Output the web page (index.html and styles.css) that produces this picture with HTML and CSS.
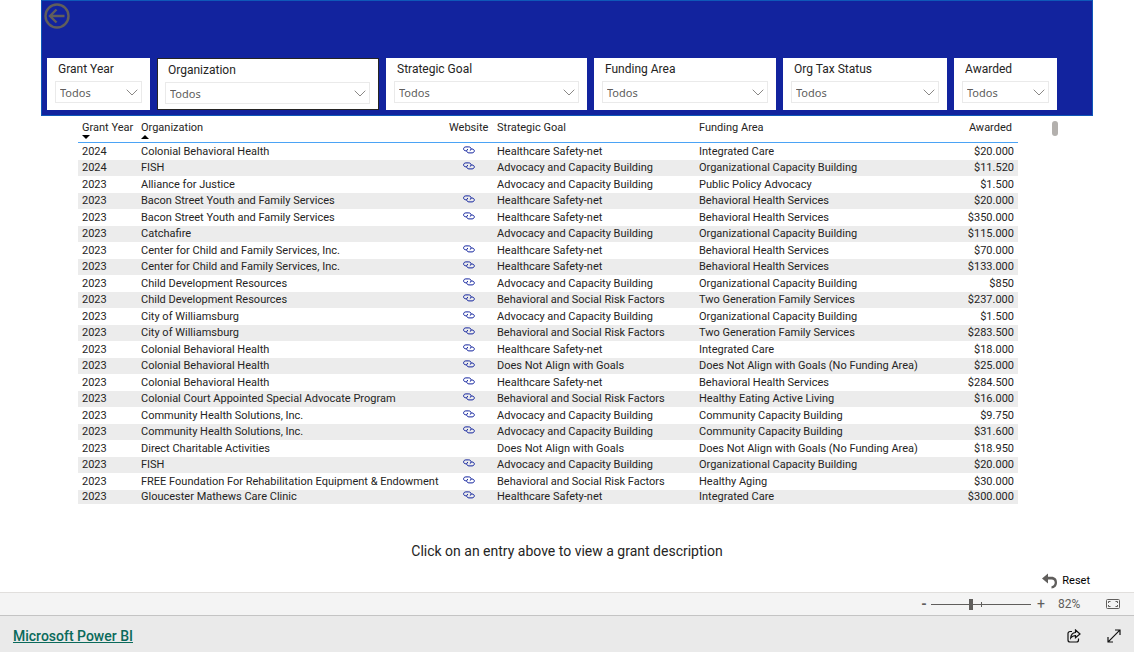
FILE: index.html
```html
<!DOCTYPE html>
<html lang="en">
<head>
<meta charset="utf-8">
<meta name="viewport" content="width=device-width, initial-scale=1">
<title>Grants</title>
<link rel="stylesheet" href="styles.css">
</head>
<body>
<svg class="sprite" aria-hidden="true">
  <symbol id="link" viewBox="0 0 12 8"><path d="M3.500 4.800H2.800C1.500 4.800.6 4 .6 2.900S1.500.900 2.800.900h3c1.300 0 2.300.8 2.300 2 0 .8-.5 1.500-1.300 1.800M8.300 3h.7c1.300 0 2.300.8 2.300 1.900S10.300 6.900 9 6.900H6C4.700 6.900 3.700 6 3.700 4.900c0-.8.500-1.500 1.300-1.800" fill="none" stroke="currentColor"/></symbol>
  <symbol id="chevron" viewBox="0 0 12 7"><path d="M.7.7 6 6 11.300.7" fill="none" stroke="currentColor"/></symbol>
</svg>
<main class="report">
  <header class="banner">
    <button class="back" aria-label="Back"><svg viewBox="0 0 26 26"><circle cx="13" cy="13" r="11.500"/><path d="M20.500 13H6M12.500 6.500 6 13l6.500 6.500"/></svg></button>
    <div class="slicers">
      <div class="slicer"><label for="s1">Grant Year</label><div class="pick"><select id="s1"><option>Todos</option></select><svg><use href="#chevron"/></svg></div></div>
      <div class="slicer selected"><label for="s2">Organization</label><div class="pick"><select id="s2"><option>Todos</option></select><svg><use href="#chevron"/></svg></div></div>
      <div class="slicer"><label for="s3">Strategic Goal</label><div class="pick"><select id="s3"><option>Todos</option></select><svg><use href="#chevron"/></svg></div></div>
      <div class="slicer"><label for="s4">Funding Area</label><div class="pick"><select id="s4"><option>Todos</option></select><svg><use href="#chevron"/></svg></div></div>
      <div class="slicer"><label for="s5">Org Tax Status</label><div class="pick"><select id="s5"><option>Todos</option></select><svg><use href="#chevron"/></svg></div></div>
      <div class="slicer"><label for="s6">Awarded</label><div class="pick"><select id="s6"><option>Todos</option></select><svg><use href="#chevron"/></svg></div></div>
    </div>
  </header>
  <div class="grid-area">
    <table class="grants">
      <colgroup><col class="c-year"><col class="c-org"><col class="c-web"><col class="c-goal"><col class="c-area"><col class="c-award"></colgroup>
      <thead><tr>
        <th aria-sort="descending">Grant Year<svg class="sort" viewBox="0 0 8 4"><path d="M0 0h8L4 4z"/></svg></th>
        <th aria-sort="ascending">Organization<svg class="sort" viewBox="0 0 8 4"><path d="M0 4h8L4 0z"/></svg></th>
        <th>Website</th><th>Strategic Goal</th><th>Funding Area</th><th class="num">Awarded</th>
      </tr></thead>
      <tbody>
        <tr><td>2024</td><td>Colonial Behavioral Health</td><td><a href="#" aria-label="Website"><svg><use href="#link"/></svg></a></td><td>Healthcare Safety-net</td><td>Integrated Care</td><td>$20.000</td></tr>
        <tr><td>2024</td><td>FISH</td><td><a href="#" aria-label="Website"><svg><use href="#link"/></svg></a></td><td>Advocacy and Capacity Building</td><td>Organizational Capacity Building</td><td>$11.520</td></tr>
        <tr><td>2023</td><td>Alliance for Justice</td><td></td><td>Advocacy and Capacity Building</td><td>Public Policy Advocacy</td><td>$1.500</td></tr>
        <tr><td>2023</td><td>Bacon Street Youth and Family Services</td><td><a href="#" aria-label="Website"><svg><use href="#link"/></svg></a></td><td>Healthcare Safety-net</td><td>Behavioral Health Services</td><td>$20.000</td></tr>
        <tr><td>2023</td><td>Bacon Street Youth and Family Services</td><td><a href="#" aria-label="Website"><svg><use href="#link"/></svg></a></td><td>Healthcare Safety-net</td><td>Behavioral Health Services</td><td>$350.000</td></tr>
        <tr><td>2023</td><td>Catchafire</td><td></td><td>Advocacy and Capacity Building</td><td>Organizational Capacity Building</td><td>$115.000</td></tr>
        <tr><td>2023</td><td>Center for Child and Family Services, Inc.</td><td><a href="#" aria-label="Website"><svg><use href="#link"/></svg></a></td><td>Healthcare Safety-net</td><td>Behavioral Health Services</td><td>$70.000</td></tr>
        <tr><td>2023</td><td>Center for Child and Family Services, Inc.</td><td><a href="#" aria-label="Website"><svg><use href="#link"/></svg></a></td><td>Healthcare Safety-net</td><td>Behavioral Health Services</td><td>$133.000</td></tr>
        <tr><td>2023</td><td>Child Development Resources</td><td><a href="#" aria-label="Website"><svg><use href="#link"/></svg></a></td><td>Advocacy and Capacity Building</td><td>Organizational Capacity Building</td><td>$850</td></tr>
        <tr><td>2023</td><td>Child Development Resources</td><td><a href="#" aria-label="Website"><svg><use href="#link"/></svg></a></td><td>Behavioral and Social Risk Factors</td><td>Two Generation Family Services</td><td>$237.000</td></tr>
        <tr><td>2023</td><td>City of Williamsburg</td><td><a href="#" aria-label="Website"><svg><use href="#link"/></svg></a></td><td>Advocacy and Capacity Building</td><td>Organizational Capacity Building</td><td>$1.500</td></tr>
        <tr><td>2023</td><td>City of Williamsburg</td><td><a href="#" aria-label="Website"><svg><use href="#link"/></svg></a></td><td>Behavioral and Social Risk Factors</td><td>Two Generation Family Services</td><td>$283.500</td></tr>
        <tr><td>2023</td><td>Colonial Behavioral Health</td><td><a href="#" aria-label="Website"><svg><use href="#link"/></svg></a></td><td>Healthcare Safety-net</td><td>Integrated Care</td><td>$18.000</td></tr>
        <tr><td>2023</td><td>Colonial Behavioral Health</td><td><a href="#" aria-label="Website"><svg><use href="#link"/></svg></a></td><td>Does Not Align with Goals</td><td>Does Not Align with Goals (No Funding Area)</td><td>$25.000</td></tr>
        <tr><td>2023</td><td>Colonial Behavioral Health</td><td><a href="#" aria-label="Website"><svg><use href="#link"/></svg></a></td><td>Healthcare Safety-net</td><td>Behavioral Health Services</td><td>$284.500</td></tr>
        <tr><td>2023</td><td>Colonial Court Appointed Special Advocate Program</td><td><a href="#" aria-label="Website"><svg><use href="#link"/></svg></a></td><td>Behavioral and Social Risk Factors</td><td>Healthy Eating Active Living</td><td>$16.000</td></tr>
        <tr><td>2023</td><td>Community Health Solutions, Inc.</td><td><a href="#" aria-label="Website"><svg><use href="#link"/></svg></a></td><td>Advocacy and Capacity Building</td><td>Community Capacity Building</td><td>$9.750</td></tr>
        <tr><td>2023</td><td>Community Health Solutions, Inc.</td><td><a href="#" aria-label="Website"><svg><use href="#link"/></svg></a></td><td>Advocacy and Capacity Building</td><td>Community Capacity Building</td><td>$31.600</td></tr>
        <tr><td>2023</td><td>Direct Charitable Activities</td><td></td><td>Does Not Align with Goals</td><td>Does Not Align with Goals (No Funding Area)</td><td>$18.950</td></tr>
        <tr><td>2023</td><td>FISH</td><td><a href="#" aria-label="Website"><svg><use href="#link"/></svg></a></td><td>Advocacy and Capacity Building</td><td>Organizational Capacity Building</td><td>$20.000</td></tr>
        <tr><td>2023</td><td>FREE Foundation For Rehabilitation Equipment &amp; Endowment</td><td><a href="#" aria-label="Website"><svg><use href="#link"/></svg></a></td><td>Behavioral and Social Risk Factors</td><td>Healthy Aging</td><td>$30.000</td></tr>
        <tr><td>2023</td><td>Gloucester Mathews Care Clinic</td><td><a href="#" aria-label="Website"><svg><use href="#link"/></svg></a></td><td>Healthcare Safety-net</td><td>Integrated Care</td><td>$300.000</td></tr>
      </tbody>
    </table>
    <div class="scroll"><div class="scroll-thumb"></div></div>
  </div>
  <p class="hint">Click on an entry above to view a grant description</p>
  <div class="actions">
    <button class="reset"><svg viewBox="0 0 16 16"><path d="M0 5.500 6 .5v3.300h3.500c3.500 0 5.500 2.200 5.500 5.600 0 3.300-2 5.700-5.500 6.100v-2.200c2-.4 3.200-1.700 3.200-3.700 0-2.200-1.200-3.200-3.200-3.200H6v4z"/></svg>Reset</button>
  </div>
</main>
<div class="zoombar">
  <button class="step minus" aria-label="Zoom out">-</button>
  <div class="range"><input type="range" min="0" max="100" value="40" aria-label="Zoom"></div>
  <button class="step" aria-label="Zoom in">+</button>
  <span class="percent">82%</span>
  <button class="fit" aria-label="Fit to page"><svg viewBox="0 0 14 10"><rect x=".5" y=".5" width="13" height="9" rx="1"/><path d="M4.500 2.500h-2v1.500M2.500 6v1.500h2M9.500 2.500h2v1.500M11.500 6v1.500h-2"/></svg></button>
</div>
<footer class="footer">
  <a class="brand" href="#">Microsoft Power BI</a>
  <div class="tools">
    <button aria-label="Share"><svg viewBox="0 0 14 14"><path d="M5 2.500H3a2 2 0 0 0-2 2V11a2 2 0 0 0 2 2h6.500a2 2 0 0 0 2-2V9.500"/><path d="M8.500 1 13 5 8.500 8.800V6.600C6.500 6.500 5 7.200 3.700 9c.2-3 2-5.200 4.800-5.500z"/></svg></button>
    <button aria-label="Full screen"><svg viewBox="0 0 14 14"><path d="M1.200 12.800 12.800 1.200M8 1h5v5M1 8v5h5"/></svg></button>
  </div>
</footer>
</body>
</html>
```
FILE: styles.css
```css
* { box-sizing: border-box; }
body {
  margin: 0;
  min-height: 100vh;
  display: flex;
  flex-direction: column;
  background: #fff;
  color: #252423;
  font-family: "Segoe UI", Roboto, sans-serif;
  font-size: 11px;
}
button { padding: 0; border: 0; background: none; font: inherit; color: inherit; cursor: pointer; }
svg { display: block; }
.sprite { position: absolute; width: 0; height: 0; }
.report { flex: 1; padding: 0 41px; display: flex; flex-direction: column; }

.banner {
  display: flex;
  flex-direction: column;
  gap: 29px;
  padding: 2px 35px 5px 5px;
  background: #12239e;
  border: 1px solid #0f58b8;
}
.back { width: 26px; height: 26px; margin-left: -3px; }
.back svg { fill: none; stroke: #605e5c; stroke-width: 2.4; }
.slicers { display: grid; grid-template-columns: 103fr 222fr 201fr 182fr 164fr 103fr; gap: 7px; }
.slicer {
  min-width: 0;
  padding: 3px 8px 7px;
  background: #fff;
  font-family: "DIN", Roboto, sans-serif;
  font-size: 12px;
}
.slicer.selected { border: 1px solid #252423; padding: 3px 8px 5px 7px; }
.slicer label { display: block; padding: 0 3px; line-height: 16px; margin-bottom: 4px; }
.pick { display: grid; align-items: center; }
.pick > * { grid-area: 1 / 1; }
.pick select {
  appearance: none;
  width: 100%;
  height: 22px;
  padding: 0 4px;
  border: 1px solid #eaeaea;
  border-radius: 0;
  background: #fff;
  color: #605e5c;
  font-family: "Segoe UI", "Noto Sans", sans-serif;
  font-size: 11px;
}
.pick svg { justify-self: end; width: 12px; height: 7px; margin-right: 4px; color: #8a8886; pointer-events: none; }

.grid-area { display: flex; padding: 0 35px 0 37px; }
.grants { flex: 1; width: 100%; table-layout: fixed; border-collapse: separate; border-spacing: 0; line-height: 14px; white-space: nowrap; }
.c-year { width: 59px; }
.c-org { width: 308px; }
.c-web { width: 48px; }
.c-goal { width: 202px; }
.c-award { width: 70px; }
.grants th { height: 27px; padding: 5px 4px 0; text-align: left; vertical-align: top; font-weight: 400; border-bottom: 1px solid #4ba3f5; }
.grants th.num { text-align: right; padding-right: 6px; }
.sort { width: 8px; height: 4px; }
.grants td { height: 16px; padding: 0 4px; }
.grants tr:nth-child(odd) td { height: 17px; }
.grants tbody tr:last-child td { height: 14px; }
.grants tbody tr:nth-child(even) { background: #ececec; }
.grants td:last-child { text-align: right; }
.grants td a { display: block; width: 12px; margin: 0 auto 4px; color: #12239e; }
.grants td svg { width: 12px; height: 8px; }
.scroll { flex: none; width: 6px; margin-left: 34px; padding-top: 5px; }
.scroll-thumb { height: 15px; border-radius: 3px; background: #b3b0ad; }

.hint { margin: 37px 0 0; text-align: center; font-family: "DIN", Roboto, sans-serif; font-size: 14px; line-height: 20px; }
.actions { display: flex; justify-content: flex-end; margin-top: auto; padding: 0 3px 3px 0; }
.reset { display: flex; align-items: center; gap: 4px; line-height: 16px; color: #000; }
.reset svg { width: 16px; height: 16px; fill: #605e5c; }

.zoombar { display: flex; align-items: center; height: 23px; padding-right: 14px; border-top: 1px solid #e1dfdd; background: #f4f4f4; color: #605e5c; }
.step { width: 14px; font-size: 14px; line-height: 20px; }
.minus { width: 8px; margin-left: auto; font-weight: 700; }
.range { width: 100px; margin: 0 3px; background: linear-gradient(#605e5c, #605e5c) center / 1px 5px no-repeat; }
.range input { appearance: none; display: block; width: 100%; height: 14px; margin: 0; background: linear-gradient(#605e5c, #605e5c) center / 100% 1px no-repeat; }
.range input::-webkit-slider-thumb { appearance: none; width: 4px; height: 11px; background: #605e5c; }
.percent { width: 38px; margin-left: 10px; font-size: 12px; }
.fit { margin-left: 10px; }
.fit svg { width: 14px; height: 10px; fill: none; stroke: #605e5c; }

.footer { display: flex; align-items: center; justify-content: space-between; height: 37px; padding: 4px 13px 0; border-top: 1px solid #c4c4c4; background: #eaeaea; }
.brand { color: #0b6a5b; font-family: "Segoe UI", Roboto, sans-serif; font-size: 14px; font-weight: 500; line-height: 20px; }
.tools { display: flex; gap: 26px; color: #111; }
.tools svg { width: 14px; height: 14px; fill: none; stroke: currentColor; stroke-width: 1.2; }
```
